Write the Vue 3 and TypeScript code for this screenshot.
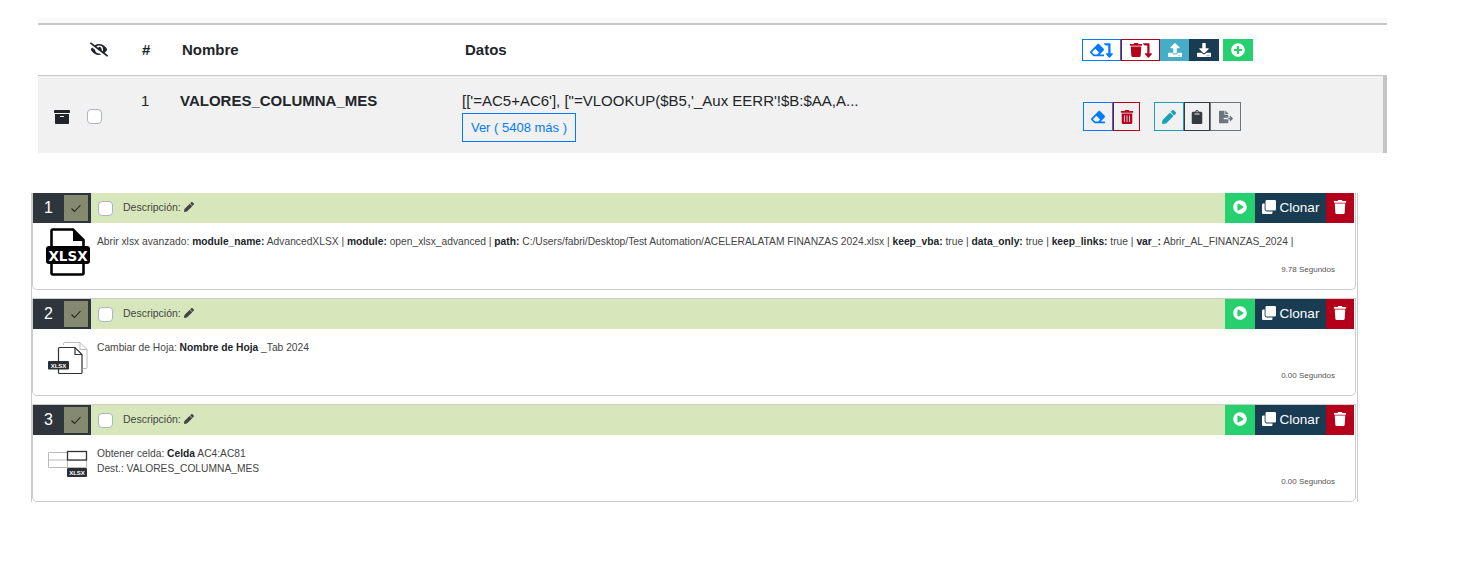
<script setup lang="ts">
interface Part {
  label?: string;
  value: string;
}
interface Step {
  n: number;
  icon: string;
  time: string;
  lines: Part[][];
}

const icons: Record<string, { box: string; d: string }> = {
  trash: {
    box: "0 0 448 512",
    d: "M432 32H312l-9.4-18.7A24 24 0 0 0 281.1 0H166.8a23.72 23.72 0 0 0-21.4 13.3L136 32H16A16 16 0 0 0 0 48v32a16 16 0 0 0 16 16h416a16 16 0 0 0 16-16V48a16 16 0 0 0-16-16zM53.2 467a48 48 0 0 0 47.9 45h245.8a48 48 0 0 0 47.9-45L416 128H32z",
  },
  trashAlt: {
    box: "0 0 448 512",
    d: "M32 464a48 48 0 0 0 48 48h288a48 48 0 0 0 48-48V128H32zm272-256a16 16 0 0 1 32 0v224a16 16 0 0 1-32 0zm-96 0a16 16 0 0 1 32 0v224a16 16 0 0 1-32 0zm-96 0a16 16 0 0 1 32 0v224a16 16 0 0 1-32 0zM432 32H312l-9.4-18.7A24 24 0 0 0 281.1 0H166.8a23.72 23.72 0 0 0-21.4 13.3L136 32H16A16 16 0 0 0 0 48v32a16 16 0 0 0 16 16h416a16 16 0 0 0 16-16V48a16 16 0 0 0-16-16z",
  },
  eraser: {
    box: "0 0 512 512",
    d: "M497.941 273.941c18.745-18.745 18.745-49.137 0-67.882l-160-160c-18.745-18.745-49.136-18.746-67.883 0l-256 256c-18.745 18.745-18.745 49.137 0 67.882l96 96A48.004 48.004 0 0 0 144 480h356c6.627 0 12-5.373 12-12v-40c0-6.627-5.373-12-12-12H355.883l142.058-142.059zm-302.627-62.627l137.373 137.373L265.373 416H150.628l-80-80 124.686-124.686z",
  },
  pencil: {
    box: "0 0 512 512",
    d: "M497.9 142.1l-46.1 46.1c-4.7 4.7-12.3 4.7-17 0l-111-111c-4.7-4.7-4.7-12.3 0-17l46.1-46.1c18.7-18.7 49.1-18.7 67.9 0l60.1 60.1c18.8 18.7 18.8 49.1 0 67.9zM284.2 99.8L21.6 362.4.4 483.9c-2.9 16.4 11.4 30.6 27.8 27.8l121.5-21.3 262.6-262.6c4.7-4.7 4.7-12.3 0-17l-111-111c-4.8-4.7-12.4-4.7-17.1 0z",
  },
  archive: {
    box: "0 0 512 512",
    d: "M32 448c0 17.7 14.3 32 32 32h384c17.7 0 32-14.3 32-32V160H32v288zm160-212c0-6.6 5.4-12 12-12h104c6.6 0 12 5.4 12 12v8c0 6.6-5.4 12-12 12H204c-6.6 0-12-5.4-12-12v-8zM480 32H32C14.3 32 0 46.3 0 64v48c0 8.8 7.2 16 16 16h480c8.8 0 16-7.2 16-16V64c0-17.7-14.3-32-32-32z",
  },
  play: {
    box: "0 0 512 512",
    d: "M256 8C119 8 8 119 8 256s111 248 248 248 248-111 248-248S393 8 256 8zm115.7 272l-176 101c-15.8 8.8-35.7-2.5-35.7-21V152c0-18.4 19.8-29.8 35.7-21l176 107c16.4 9.2 16.4 32.9 0 42z",
  },
  plus: {
    box: "0 0 512 512",
    d: "M256 8C119 8 8 119 8 256s111 248 248 248 248-111 248-248S393 8 256 8zm144 276c0 6.6-5.4 12-12 12h-92v92c0 6.6-5.4 12-12 12h-56c-6.6 0-12-5.4-12-12v-92h-92c-6.6 0-12-5.4-12-12v-56c0-6.6 5.4-12 12-12h92v-92c0-6.6 5.4-12 12-12h56c6.6 0 12 5.4 12 12v92h92c6.6 0 12 5.4 12 12v56z",
  },
  clone: {
    box: "0 0 512 512",
    d: "M464 0c26.51 0 48 21.49 48 48v288c0 26.51-21.49 48-48 48H176c-26.51 0-48-21.49-48-48V48c0-26.51 21.49-48 48-48h288M176 416c-44.112 0-80-35.888-80-80V128H48c-26.51 0-48 21.49-48 48v288c0 26.51 21.49 48 48 48h288c26.51 0 48-21.49 48-48v-48H176z",
  },
  upload: {
    box: "0 0 512 512",
    d: "M296 384h-80c-13.3 0-24-10.7-24-24V192h-87.7c-17.8 0-26.7-21.5-14.1-34.1L242.3 5.7c7.5-7.5 19.8-7.5 27.3 0l152.2 152.2c12.6 12.6 3.7 34.1-14.1 34.1H320v168c0 13.3-10.7 24-24 24zm216-8v112c0 13.3-10.7 24-24 24H24c-13.3 0-24-10.7-24-24V376c0-13.3 10.7-24 24-24h136v8c0 30.9 25.1 56 56 56h80c30.9 0 56-25.1 56-56v-8h136c13.3 0 24 10.7 24 24zm-124 88c0-11-9-20-20-20s-20 9-20 20 9 20 20 20 20-9 20-20zm64 0c0-11-9-20-20-20s-20 9-20 20 9 20 20 20 20-9 20-20z",
  },
  download: {
    box: "0 0 512 512",
    d: "M216 0h80c13.3 0 24 10.7 24 24v168h87.7c17.8 0 26.7 21.5 14.1 34.1L269.7 378.3c-7.5 7.5-19.8 7.5-27.3 0L90.1 226.1c-12.6-12.6-3.7-34.1 14.1-34.1H192V24c0-13.3 10.7-24 24-24zm296 376v112c0 13.3-10.7 24-24 24H24c-13.3 0-24-10.7-24-24V376c0-13.3 10.7-24 24-24h146.7l49 49c20.1 20.1 52.5 20.1 72.6 0l49-49H488c13.3 0 24 10.7 24 24zm-124 88c0-11-9-20-20-20s-20 9-20 20 9 20 20 20 20-9 20-20zm64 0c0-11-9-20-20-20s-20 9-20 20 9 20 20 20 20-9 20-20z",
  },
  clipboard: {
    box: "0 0 384 512",
    d: "M384 112v352c0 26.51-21.49 48-48 48H48c-26.51 0-48-21.49-48-48V112c0-26.51 21.49-48 48-48h80c0-35.29 28.71-64 64-64s64 28.71 64 64h80c26.51 0 48 21.49 48 48zM192 40c-13.255 0-24 10.745-24 24s10.745 24 24 24 24-10.745 24-24-10.745-24-24-24m96 114v-20a6 6 0 0 0-6-6H102a6 6 0 0 0-6 6v20a6 6 0 0 0 6 6h180a6 6 0 0 0 6-6z",
  },
  fileExport: {
    box: "0 0 576 512",
    d: "M384 121.9c0-6.3-2.5-12.4-7-16.9L279.1 7c-4.5-4.5-10.6-7-17-7H256v128h128zM571 308l-95.7-96.4c-10.1-10.1-27.4-3-27.4 11.3V288h-64v64h64v65.2c0 14.3 17.3 21.4 27.4 11.3L571 332c6.6-6.6 6.6-17.4 0-24zm-379 28v-32c0-8.8 7.2-16 16-16h176V160H248c-13.2 0-24-10.8-24-24V0H24C10.7 0 0 10.7 0 24v464c0 13.3 10.7 24 24 24h336c13.3 0 24-10.7 24-24V352H208c-8.8 0-16-7.2-16-16z",
  },
  eyeSlash: {
    box: "0 0 640 512",
    d: "M320 400c-75.85 0-137.25-58.71-142.9-133.11L72.2 185.82c-13.79 17.3-26.48 35.59-36.72 55.59a32.35 32.35 0 0 0 0 29.19C89.71 376.41 197.07 448 320 448c26.91 0 52.87-4 77.89-10.46L346 397.39a144.13 144.13 0 0 1-26 2.61zm313.82 58.1l-110.55-85.44a331.25 331.25 0 0 0 81.25-102.07 32.35 32.35 0 0 0 0-29.19C550.29 135.59 442.93 64 320 64a308.15 308.15 0 0 0-147.32 37.7L45.46 3.37A16 16 0 0 0 23 6.18L3.37 31.45A16 16 0 0 0 6.18 53.9l588.36 454.73a16 16 0 0 0 22.46-2.81l19.64-25.27a16 16 0 0 0-2.82-22.45zm-183.72-142l-39.3-30.38A94.75 94.75 0 0 0 416 256a94.76 94.76 0 0 0-121.31-92.21A47.65 47.65 0 0 1 304 192a46.64 46.64 0 0 1-1.54 10l-73.61-56.89A142.31 142.31 0 0 1 320 112a143.92 143.92 0 0 1 144 144c0 21.63-5.29 41.79-13.9 60.11z",
  },
  levelDown: {
    box: "0 0 320 512",
    d: "M313.553 392.331L209.587 504.334c-9.485 10.214-25.676 10.229-35.174 0L70.438 392.331C56.232 377.031 67.062 352 88.025 352H152V80H68.024a11.996 11.996 0 0 1-8.485-3.515l-56-56C-4.021 12.926 1.333 0 12.024 0H208c13.255 0 24 10.745 24 24v328h63.966c20.878 0 31.851 24.969 17.587 40.331z",
  },
};

const steps: Step[] = [
  {
    n: 1,
    icon: "open",
    time: "9.78 Segundos",
    lines: [
      [
        { value: "Abrir xlsx avanzado:" },
        { label: "module_name:", value: "AdvancedXLSX |" },
        { label: "module:", value: "open_xlsx_advanced |" },
        { label: "path:", value: "C:/Users/fabri/Desktop/Test Automation/ACELERALATAM FINANZAS 2024.xlsx |" },
        { label: "keep_vba:", value: "true |" },
        { label: "data_only:", value: "true |" },
        { label: "keep_links:", value: "true |" },
        { label: "var_:", value: "Abrir_AL_FINANZAS_2024 |" },
      ],
    ],
  },
  {
    n: 2,
    icon: "sheet",
    time: "0.00 Segundos",
    lines: [[{ value: "Cambiar de Hoja:" }, { label: "Nombre de Hoja", value: "_Tab 2024" }]],
  },
  {
    n: 3,
    icon: "cell",
    time: "0.00 Segundos",
    lines: [
      [{ value: "Obtener celda:" }, { label: "Celda", value: "AC4:AC81" }],
      [{ value: "Dest.: VALORES_COLUMNA_MES" }],
    ],
  },
];
</script>

<template>
  <div class="page">
    <section class="table">
      <div class="thead">
        <span class="c-arch"></span>
        <span class="c-eye">
          <svg class="i-eye" :viewBox="icons.eyeSlash.box"><path :d="icons.eyeSlash.d" /></svg>
        </span>
        <span class="th">#</span>
        <span class="th">Nombre</span>
        <span class="th">Datos</span>
        <div class="c-act tools">
          <button class="tb out-blue">
            <svg class="i14" :viewBox="icons.eraser.box"><path :d="icons.eraser.d" /></svg>
            <svg class="i-arrow" :viewBox="icons.levelDown.box"><path :d="icons.levelDown.d" /></svg>
          </button>
          <button class="tb out-red">
            <svg class="i14" :viewBox="icons.trash.box"><path :d="icons.trash.d" /></svg>
            <svg class="i-arrow" :viewBox="icons.levelDown.box"><path :d="icons.levelDown.d" /></svg>
          </button>
          <button class="tb narrow fill-cyan w29">
            <svg class="i14" :viewBox="icons.upload.box"><path :d="icons.upload.d" /></svg>
          </button>
          <button class="tb narrow fill-navy">
            <svg class="i14" :viewBox="icons.download.box"><path :d="icons.download.d" /></svg>
          </button>
          <button class="tb narrow fill-green add">
            <svg class="i14" :viewBox="icons.plus.box"><path :d="icons.plus.d" /></svg>
          </button>
        </div>
      </div>
      <div class="trow">
        <span class="c-arch arch">
          <svg class="i15" :viewBox="icons.archive.box"><path :d="icons.archive.d" /></svg>
        </span>
        <span class="c-eye chk-cell"><input class="chk" type="checkbox" /></span>
        <span class="c-num num">1</span>
        <span class="c-name name">VALORES_COLUMNA_MES</span>
        <div class="c-data datos">
          <div class="datos-text">[['=AC5+AC6'], ["=VLOOKUP($B5,'_Aux EERR'!$B:$AA,A...</div>
          <button class="ver">Ver ( 5408 más )</button>
        </div>
        <div class="c-act row-actions">
          <div class="group">
            <button class="rb out-blue w30">
              <svg class="i14" :viewBox="icons.eraser.box"><path :d="icons.eraser.d" /></svg>
            </button>
            <button class="rb out-red w27">
              <svg class="i14" :viewBox="icons.trashAlt.box"><path :d="icons.trashAlt.d" /></svg>
            </button>
          </div>
          <div class="group">
            <button class="rb out-teal w30">
              <svg class="i14" :viewBox="icons.pencil.box"><path :d="icons.pencil.d" /></svg>
            </button>
            <button class="rb out-dark w26">
              <svg class="i14" :viewBox="icons.clipboard.box"><path :d="icons.clipboard.d" /></svg>
            </button>
            <button class="rb out-gray w31">
              <svg class="i14" :viewBox="icons.fileExport.box"><path :d="icons.fileExport.d" /></svg>
            </button>
          </div>
        </div>
      </div>
    </section>

    <section class="steps">
      <article v-for="s in steps" :key="s.n" class="card">
        <header class="card-head">
          <span class="step-n">{{ s.n }}</span>
          <span class="step-ok">
            <svg width="12" height="12" viewBox="0 0 12 12"><polyline points="1.5,6.5 4.5,9.5 10.5,3" fill="none" stroke="#222" stroke-width="1.1" /></svg>
          </span>
          <input class="chk head-chk" type="checkbox" />
          <span class="desc">Descripción:</span>
          <svg class="i-desc" :viewBox="icons.pencil.box"><path :d="icons.pencil.d" /></svg>
          <div class="head-actions">
            <button class="hb run">
              <svg class="i14" :viewBox="icons.play.box"><path :d="icons.play.d" /></svg>
            </button>
            <button class="hb clone">
              <svg class="i14" :viewBox="icons.clone.box"><path :d="icons.clone.d" /></svg>
              Clonar
            </button>
            <button class="hb del">
              <svg class="i14" :viewBox="icons.trash.box"><path :d="icons.trash.d" /></svg>
            </button>
          </div>
        </header>
        <div class="card-body">
          <div class="step-icon">
            <svg v-if="s.icon === 'open'" class="si-open" width="44" height="48" viewBox="0 0 44 48">
              <path d="M5.5 19V3a1.5 1.5 0 0 1 1.5-1.5h20l10.5 10.5v7" fill="none" stroke="#000" stroke-width="2.6" />
              <path d="M27 1.5V13h11z" fill="#000" />
              <path d="M5.5 35v10a1.5 1.5 0 0 0 1.5 1.5h29a1.5 1.5 0 0 0 1.5-1.5V35" fill="none" stroke="#000" stroke-width="2.6" />
              <rect x="0" y="18" width="44" height="18" rx="3" fill="#000" />
              <text x="22" y="32.5" class="xl-big" text-anchor="middle">XLSX</text>
            </svg>
            <svg v-else-if="s.icon === 'sheet'" class="si-sheet" width="44" height="36" viewBox="0 0 44 36">
              <path d="M17.5 5V3.5a1 1 0 0 1 1-1h15.500l7 7v18a1 1 0 0 1-1 1H37" fill="none" stroke="#bbb" stroke-width="1" />
              <path d="M34 2.500v7h7" fill="none" stroke="#bbb" stroke-width="1" />
              <path d="M12.500 21V8.500a1 1 0 0 1 1-1h15.500l7 7v18a1 1 0 0 1-1 1H13.500a1 1 0 0 1-1-1V29" fill="#fff" stroke="#333" stroke-width="1.200" />
              <path d="M29 7.500v7h7" fill="none" stroke="#333" stroke-width="1.200" />
              <rect x="2" y="21" width="21" height="8.500" rx="1" fill="#2a2f36" />
              <text x="12.500" y="27.500" class="xl-small" text-anchor="middle">XLSX</text>
            </svg>
            <svg v-else class="si-cell" width="44" height="30" viewBox="0 0 44 30">
              <path d="M2.500 4.500h38v15h-38zM2.500 12h38M21.500 4.500v15" fill="none" stroke="#bbb" stroke-width="1" />
              <rect x="21.500" y="3.500" width="19" height="8.500" fill="#fff" stroke="#333" stroke-width="1.300" />
              <rect x="21" y="20" width="20" height="9" rx="1" fill="#2a2f36" />
              <text x="31" y="27" class="xl-small" text-anchor="middle">XLSX</text>
            </svg>
          </div>
          <div class="step-text">
            <div v-for="(line, i) in s.lines" :key="i" class="line">
              <template v-for="(p, j) in line" :key="j">
                <b v-if="p.label">{{ p.label }}</b>{{ (p.label ? " " : "") + p.value + " " }}
              </template>
            </div>
          </div>
          <div class="time">{{ s.time }}</div>
        </div>
      </article>
    </section>
  </div>
</template>

<style>
body {
  margin: 0;
  background: #fff;
}
</style>

<style scoped>
.page {
  height: 564px;
  box-sizing: border-box;
  padding-top: 18px;
  font-family: "Liberation Sans", Arial, sans-serif;
  overflow: hidden;
}

button {
  font-family: inherit;
  cursor: pointer;
  padding: 0;
  display: flex;
  align-items: center;
  justify-content: center;
  box-sizing: border-box;
}

svg {
  fill: currentColor;
}

.i14 {
  width: 14px;
  height: 14px;
}

.i15 {
  width: 16px;
  height: 16px;
}

.table {
  margin-left: 38px;
  width: 1349px;
  border-top: 5px solid #f9f9f9;
}

.thead,
.trow {
  display: grid;
  grid-template-columns: 50px 54px 40px 283px 617px 305px;
}

.thead {
  height: 53px;
  box-sizing: border-box;
  align-items: center;
  border-top: 2px solid #c8c8c8;
  border-bottom: 1px solid #c8c8c8;
  color: #212529;
  font-size: 15px;
  font-weight: 700;
}

.th {
  padding-bottom: 2px;
}

.c-eye {
  display: flex;
  padding-left: 2px;
}

.i-eye {
  width: 18px;
  height: 15px;
  margin-bottom: 1px;
  color: #212529;
}

.tools {
  display: flex;
}

.tb {
  height: 22px;
  width: 39px;
  background: #fff;
  border-width: 1px;
  border-style: solid;
}

.tb.narrow {
  width: 30px;
  border: none;
  color: #fff;
}

.tb.w29 {
  width: 29px;
}

.i-arrow {
  width: 9px;
  height: 15px;
}

.out-blue {
  border: 1px solid #007bff;
  color: #007bff;
  background: transparent;
}

.out-red {
  border: 1px solid #b5001b;
  color: #b5001b;
  background: transparent;
}

.out-teal {
  border: 1px solid #17a2b8;
  color: #17a2b8;
  background: transparent;
}

.out-dark {
  border: 1px solid #343a40;
  color: #343a40;
  background: transparent;
}

.out-gray {
  border: 1px solid #6c757d;
  color: #6c757d;
  background: transparent;
}

.fill-cyan {
  background: #46adc6;
}

.fill-navy {
  background: #1a3c52;
}

.fill-green {
  background: #26d06e;
}

.tb.add {
  margin-left: 4px;
}

.trow {
  position: relative;
  height: 77px;
  background: #f1f1f1;
  border-right: 4px solid #c4c4c4;
  box-sizing: border-box;
  color: #212529;
  font-size: 15px;
}

.arch {
  padding: 33px 0 0 16px;
  color: #212529;
}

.chk {
  appearance: none;
  margin: 0;
  width: 15px;
  height: 15px;
  background: #fff;
  border: 1px solid #adb5bd;
  border-radius: 4px;
  box-sizing: border-box;
}

.chk-cell {
  padding-top: 33px;
  padding-left: 0;
  margin-left: -1px;
  align-items: flex-start;
}

.num {
  padding-top: 16px;
  margin-left: -1px;
}

.name {
  padding-top: 16px;
  margin-left: -2px;
  font-weight: 700;
}

.datos {
  margin-left: -3px;
  padding-top: 16px;
}

.datos-text {
  line-height: 17px;
  white-space: nowrap;
}

.ver {
  margin-top: 4px;
  height: 29px;
  width: 114px;
  background: transparent;
  border: 1px solid #007bff;
  color: #007bff;
  font-size: 13px;
}

.row-actions {
  display: flex;
  gap: 14px;
  padding-top: 26px;
  margin-left: 1px;
}

.group {
  display: flex;
  height: 29px;
}

.rb {
  height: 29px;
}

.w30 {
  width: 30px;
}

.w27 {
  width: 27px;
}

.w26 {
  width: 26px;
}

.w31 {
  width: 31px;
}

.steps {
  margin: 40px 0 0 31px;
  width: 1327px;
  box-sizing: border-box;
  border-left: 1px solid #ccc;
  border-right: 1px solid #ccc;
  padding-right: 1px;
  display: flex;
  flex-direction: column;
  gap: 8px;
}

.card {
  height: 98px;
  box-sizing: border-box;
  border: 1px solid #ccc;
  border-radius: 0 0 5px 5px;
  padding-right: 1px;
  display: flex;
  flex-direction: column;
}

.card:first-child {
  border-top: none;
  height: 97px;
}

.card-head {
  height: 30px;
  flex: none;
  background: #d7e7bb;
  display: flex;
  align-items: center;
}

.step-n {
  width: 31px;
  height: 30px;
  padding-bottom: 1px;
  box-sizing: border-box;
  background: #2f353c;
  color: #fff;
  font-size: 16px;
  display: flex;
  align-items: center;
  justify-content: center;
}

.step-ok {
  width: 27px;
  height: 30px;
  box-sizing: border-box;
  background: #85896f;
  border: solid #2f353c;
  border-width: 2px 3px 2px 0;
  display: flex;
  align-items: center;
  justify-content: center;
}

.head-chk {
  margin-left: 7px;
}

.desc {
  margin: 0 0 2px 10px;
  font-size: 10.5px;
  color: #444;
}

.i-desc {
  width: 10px;
  height: 10px;
  margin: 0 0 2px 3px;
  color: #444;
}

.head-actions {
  margin-left: auto;
  display: flex;
  height: 30px;
}

.hb {
  border: none;
  color: #fff;
  height: 30px;
  padding-bottom: 2px;
  font-size: 13.5px;
  gap: 4px;
}

.run {
  width: 30px;
  background: #26d06e;
}

.clone {
  width: 71px;
  background: #1a3c52;
}

.del {
  width: 28px;
  background: #b5001b;
}

.card-body {
  flex: 1;
  position: relative;
  display: flex;
  padding-left: 13px;
  font-size: 10.25px;
  color: #444;
}

.step-icon {
  width: 51px;
  flex: none;
}

.si-open {
  margin-top: 5px;
}

.si-sheet {
  margin-top: 11px;
}

.si-cell {
  margin-top: 13px;
}

.step-text {
  padding-top: 11px;
  line-height: 15px;
}

.line b {
  color: #212529;
}

.time {
  position: absolute;
  right: 19px;
  bottom: 15px;
  font-size: 8px;
  color: #555;
}

.xl-big {
  font: 700 13.5px "DejaVu Sans", sans-serif;
  fill: #fff;
}

.xl-small {
  font: 700 6px "Liberation Sans", sans-serif;
  fill: #fff;
}
</style>
